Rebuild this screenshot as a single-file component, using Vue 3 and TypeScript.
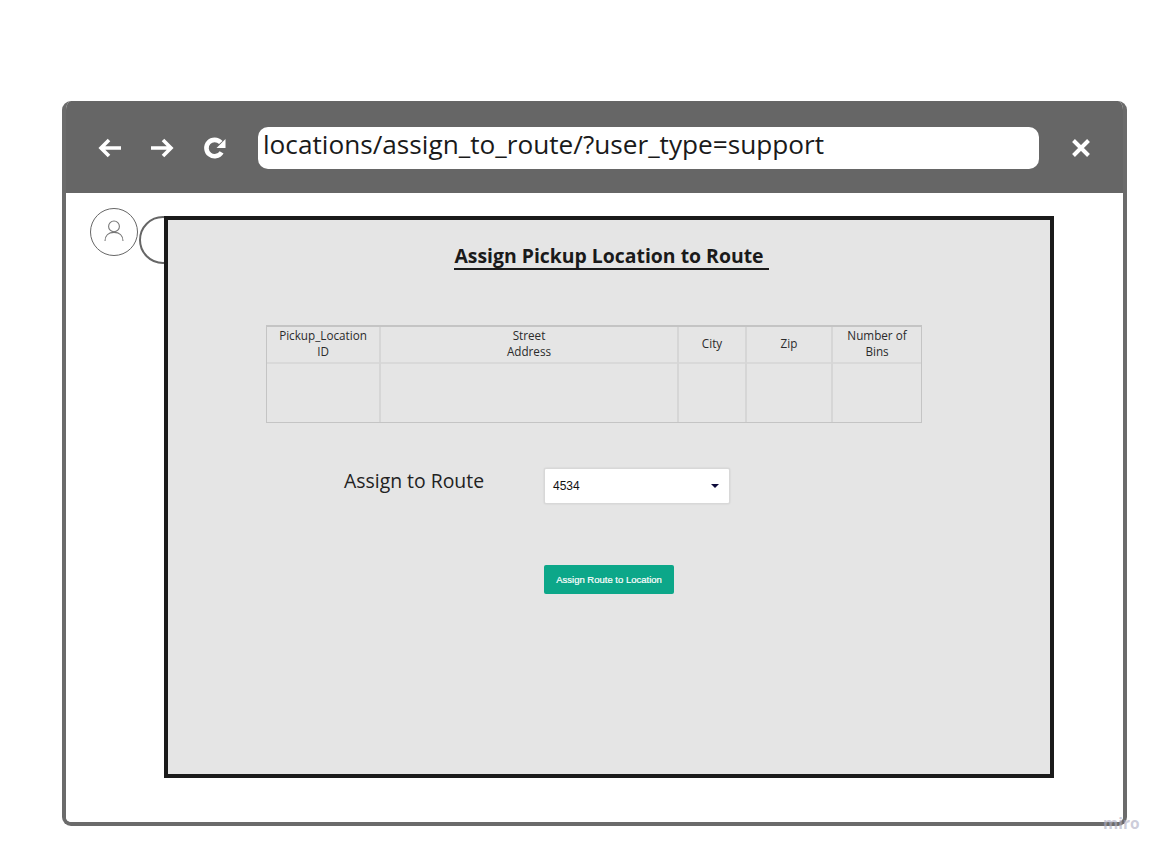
<script setup lang="ts">
interface Column {
  label: string[];
  width: number;
}

const columns: Column[] = [
  { label: ['Pickup_Location', 'ID'], width: 112 },
  { label: ['Street', 'Address'], width: 298 },
  { label: ['City'], width: 68 },
  { label: ['Zip'], width: 86 },
  { label: ['Number of', 'Bins'], width: 90 },
];
</script>

<template>
  <div class="page">
    <div class="window">
      <header class="toolbar">
        <div class="nav">
          <svg class="nav-icon" viewBox="0 0 26 24" aria-hidden="true">
            <path d="M24 12H4M12 4l-8 8 8 8" fill="none" stroke="#fff" stroke-width="3.6" />
          </svg>
          <svg class="nav-icon" viewBox="0 0 26 24" aria-hidden="true">
            <path d="M2 12h20M14 4l8 8-8 8" fill="none" stroke="#fff" stroke-width="3.6" />
          </svg>
          <svg class="nav-icon reload" viewBox="0 0 24 24" aria-hidden="true">
            <path d="M18.6 16.4A8.2 8.2 0 1 1 17.8 6.6" fill="none" stroke="#fff" stroke-width="4.6" />
            <path d="M22.5 3v9h-9z" fill="#fff" />
          </svg>
        </div>
        <div class="url">locations/assign_to_route/?user_type=support</div>
        <svg class="close" viewBox="0 0 20 20" aria-hidden="true">
          <path d="M2.5 2.5l15 15M17.5 2.5l-15 15" fill="none" stroke="#fff" stroke-width="4" />
        </svg>
      </header>

      <div class="body">
        <div class="avatar">
          <svg viewBox="0 0 24 24" width="24" height="24" aria-hidden="true">
            <circle cx="12" cy="7.4" r="5.4" fill="none" stroke="#777" stroke-width="1.1" />
            <path d="M3 22c0-5.4 3.6-8.6 9-8.6s9 3.2 9 8.6" fill="none" stroke="#777" stroke-width="1.1" />
          </svg>
        </div>

        <main class="panel">
          <span class="ghost-circle" aria-hidden="true" />
          <h1 class="title">Assign Pickup Location to Route&nbsp;</h1>

          <div class="table">
            <div v-for="col in columns" :key="col.label[0]" class="col" :style="{ width: col.width + 'px' }">
              <div class="head">
                <span v-for="line in col.label" :key="line">{{ line }}</span>
              </div>
              <div class="cell" />
            </div>
          </div>

          <div class="assign">
            <label class="assign-label">Assign to Route</label>
            <div class="select">
              <span>4534</span>
              <i class="caret" />
            </div>
          </div>

          <button class="submit" type="button">Assign Route to Location</button>
        </main>
      </div>
    </div>

    <span class="watermark">miro</span>
  </div>
</template>

<style>
html,
body {
  margin: 0;
  background: #fff;
}
</style>

<style scoped>
.page {
  position: relative;
  box-sizing: border-box;
  width: 1167px;
  height: 856px;
  padding: 101px 0 0 62px;
  overflow: hidden;
  font-family: 'Open Sans', sans-serif;
  color: #1a1a1a;
}

.window {
  box-sizing: border-box;
  width: 1065px;
  height: 725px;
  display: flex;
  flex-direction: column;
  border: 4px solid #6b6b6b;
  border-top: 0;
  border-radius: 9px;
  overflow: hidden;
}

.toolbar {
  box-sizing: border-box;
  display: flex;
  align-items: flex-start;
  height: 92px;
  margin: 0 -4px;
  padding: 26px 0 0 35px;
  background: #666;
  flex-shrink: 0;
}

.nav {
  display: flex;
  align-items: center;
  gap: 26px;
  width: 161px;
  height: 42px;
}

.nav-icon {
  width: 26px;
  height: 24px;
}

.reload {
  margin-left: 1px;
}

.url {
  box-sizing: border-box;
  width: 781px;
  height: 42px;
  padding-left: 5px;
  border-radius: 10px;
  background: #fff;
  font-size: 26.2px;
  line-height: 35px;
  white-space: nowrap;
}

.close {
  width: 20px;
  height: 20px;
  margin: 11px 0 0 32px;
}

.body {
  display: flex;
  align-items: flex-start;
  flex: 1;
  isolation: isolate;
  background: #fff;
  padding: 15px 0 0 24px;
}

.avatar {
  box-sizing: border-box;
  display: flex;
  align-items: center;
  justify-content: center;
  width: 48px;
  height: 48px;
  margin-right: 26px;
  padding-bottom: 2px;
  border: 1px solid #666;
  border-radius: 50%;
}

.panel {
  position: relative;
  box-sizing: border-box;
  width: 890px;
  height: 562px;
  margin-top: 8px;
  padding-top: 23px;
  display: flex;
  flex-direction: column;
  border: 4px solid #1a1a1a;
  background: #e5e5e5;
}

.ghost-circle {
  position: absolute;
  left: -29px;
  top: -4px;
  z-index: -1;
  box-sizing: border-box;
  width: 48px;
  height: 48px;
  border: 2px solid #666;
  border-radius: 50%;
}

.title {
  align-self: center;
  margin: 0 0 0 5px;
  border-bottom: 2px solid #1a1a1a;
  font-size: 19.4px;
  font-weight: 700;
  line-height: 25px;
  white-space: nowrap;
}

.table {
  display: flex;
  box-sizing: border-box;
  align-self: flex-start;
  margin: 55px 0 0 98px;
  border: 1px solid #c4c4c4;
  border-top-width: 2px;
}

.col {
  box-sizing: border-box;
}

.col + .col {
  border-left: 2px solid #d6d6d6;
}

.head {
  box-sizing: border-box;
  display: flex;
  flex-direction: column;
  align-items: center;
  justify-content: center;
  height: 37px;
  padding-bottom: 3px;
  border-bottom: 2px solid #d9d9d9;
  font-size: 11.7px;
  line-height: 16px;
  color: #2b2b2b;
}

.cell {
  height: 58px;
}

.assign {
  display: flex;
  align-items: flex-start;
  margin: 45px 0 0 176px;
}

.assign-label {
  width: 200px;
  font-size: 19.4px;
  line-height: 26px;
  color: #222;
}

.select {
  box-sizing: border-box;
  display: flex;
  align-items: center;
  justify-content: space-between;
  width: 186px;
  height: 36px;
  padding: 0 10px 0 8px;
  border: 1px solid #d8d8d8;
  border-radius: 2px;
  background: #fff;
  box-shadow: 0 0 2px rgba(0, 0, 0, 0.12);
  font-family: 'Liberation Sans', Arial, sans-serif;
  font-size: 12px;
  color: #111;
}

.caret {
  width: 0;
  height: 0;
  border-left: 4px solid transparent;
  border-right: 4px solid transparent;
  border-top: 4px solid #0d0a3a;
}

.submit {
  align-self: flex-start;
  width: 130px;
  height: 29px;
  margin: 61px 0 0 376px;
  padding: 0;
  border: 0;
  border-radius: 2px;
  background: #0ca789;
  color: #fff;
  font-family: 'Liberation Sans', Arial, sans-serif;
  font-size: 9.5px;
  font-weight: 400;
  -webkit-text-stroke: 0.2px #fff;
}

.watermark {
  position: absolute;
  left: 1103px;
  top: 814px;
  font-size: 15.5px;
  font-weight: 700;
  line-height: 18px;
  color: rgba(176, 176, 196, 0.65);
}
</style>
